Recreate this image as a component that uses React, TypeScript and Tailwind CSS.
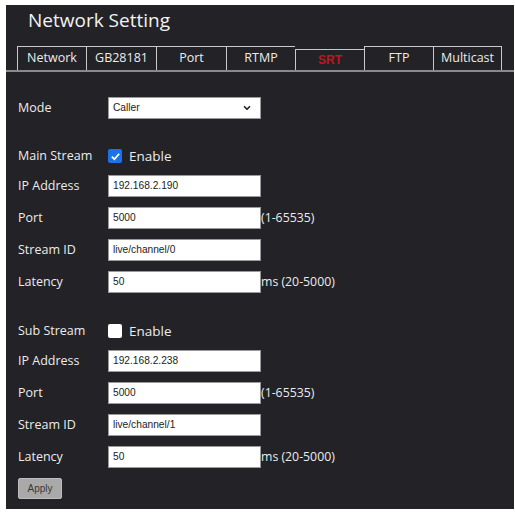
import { ChevronDown } from "lucide-react";

type Row = { label: string; value: string; suffix?: string };

const TABS = [
  { name: "Network", w: "w-[69px]" },
  { name: "GB28181", w: "w-[70px]" },
  { name: "Port", w: "w-[70px]" },
  { name: "RTMP", w: "w-[69px]" },
  { name: "SRT", w: "w-[69px]", active: true },
  { name: "FTP", w: "w-[69px]" },
  { name: "Multicast", w: "w-[69px]" },
];

const MAIN: Row[] = [
  { label: "IP Address", value: "192.168.2.190" },
  { label: "Port", value: "5000", suffix: "(1-65535)" },
  { label: "Stream ID", value: "live/channel/0" },
  { label: "Latency", value: "50", suffix: "ms (20-5000)" },
];

const SUB: Row[] = [
  { label: "IP Address", value: "192.168.2.238" },
  { label: "Port", value: "5000", suffix: "(1-65535)" },
  { label: "Stream ID", value: "live/channel/1" },
  { label: "Latency", value: "50", suffix: "ms (20-5000)" },
];

const sans = "font-['Open_Sans','Noto_Sans',sans-serif]";
const arial = "font-['Liberation_Sans',Arial,sans-serif]";

function Field({ row, first }: { row: Row; first?: boolean }) {
  return (
    <div className={`flex h-[22px] items-center ${first ? "mt-[8px]" : "mt-[10px]"}`}>
      <span className="w-[90px] text-[12.5px] text-[#ececec]">{row.label}</span>
      <div className={`flex h-[22px] w-[153px] items-center border border-[#9a9a9a] bg-white pl-[4px] text-[10.2px] text-[#222] ${arial}`}>
        {row.value}
      </div>
      {row.suffix && <span className="text-[12.3px] text-[#ececec]">{row.suffix}</span>}
    </div>
  );
}

function Check({ label, checked, className }: { label: string; checked: boolean; className: string }) {
  return (
    <div className={`flex h-[22px] items-center ${className}`}>
      <span className="w-[90px] text-[12.5px] text-[#ececec]">{label}</span>
      {checked ? (
        <span className="flex h-[14px] w-[14px] items-center justify-center rounded-[2px] bg-[#1a73e8]">
          <svg width="11" height="11" viewBox="0 0 12 12">
            <path d="M2 6.2 L4.8 9 L10 3" fill="none" stroke="white" strokeWidth="2" />
          </svg>
        </span>
      ) : (
        <span className="h-[14px] w-[14px] rounded-[2px] bg-white" />
      )}
      <span className="ml-[7px] text-[13.5px] text-[#ececec]">Enable</span>
    </div>
  );
}

export default function App() {
  return (
    <div className={`min-h-screen bg-white pl-[6px] pt-[5px] ${sans}`}>
      <div className="flex h-[504px] w-[508px] flex-col bg-[#232227]">
        {/* header */}
        <h1 className="pl-[22px] pt-[3px] text-[19px] leading-[24px] text-[#f2f2f2]">Network Setting</h1>

        {/* tabs */}
        <div className="mt-[14px] flex h-[24px] items-end pl-[11px]">
          {TABS.map((t, i) => (
            <div
              key={t.name}
              className={`${t.w} flex items-center justify-center border-l border-t border-[#c9c9c9] ${
                i === TABS.length - 1 ? "border-r" : ""
              } ${t.active ? `h-[21px] text-[12px] font-semibold text-[#c4141c] ${arial}` : "h-[24px] text-[12.5px] text-[#ececec]"}`}
            >
              {t.name}
            </div>
          ))}
        </div>
        <div className="h-[2px] w-full bg-[#8a8a8a]" />

        {/* form */}
        <div className="flex flex-col pl-[12px]">
          <div className="mt-[25px] flex h-[22px] items-center">
            <span className="w-[90px] text-[12.5px] text-[#ececec]">Mode</span>
            <div className={`flex h-[22px] w-[153px] items-center justify-between border border-[#9a9a9a] bg-white pl-[4px] pr-[8px] text-[10.2px] text-[#222] ${arial}`}>
              <span>Caller</span>
              <ChevronDown size={10} strokeWidth={4} color="#222" />
            </div>
          </div>

          <Check label="Main Stream" checked className="mt-[26px]" />
          {MAIN.map((r, i) => (
            <Field key={"m" + r.label} row={r} first={i === 0} />
          ))}

          <Check label="Sub Stream" checked={false} className="mt-[27px]" />
          {SUB.map((r, i) => (
            <Field key={"s" + r.label} row={r} first={i === 0} />
          ))}

          <button
            className={`mt-[10px] h-[21px] w-[44px] rounded-[2px] border border-[#bdbdbd] bg-[#a9a9a9] text-[10px] text-[#3a3a3a] ${arial}`}
          >
            Apply
          </button>
        </div>
      </div>
    </div>
  );
}
